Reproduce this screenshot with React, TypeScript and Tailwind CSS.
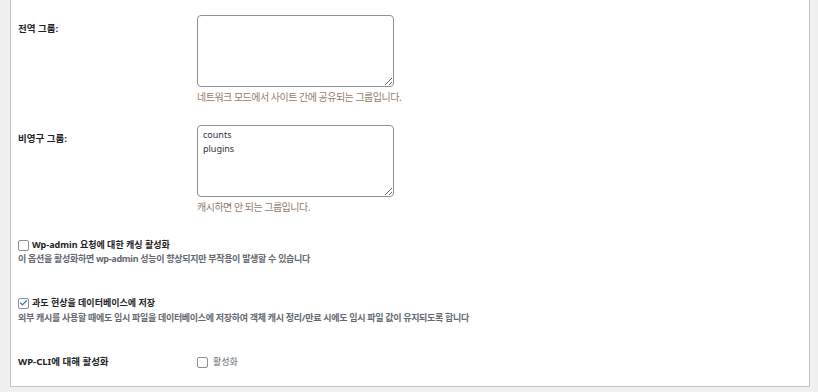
import { Check } from 'lucide-react';

const font = { fontFamily: '"Noto Sans", "Noto Sans CJK KR", sans-serif' };

function Box({ checked = false }: { checked?: boolean }) {
  return (
    <span className="flex h-[11px] w-[11px] shrink-0 items-center justify-center rounded-[2px] border border-[#8c8f94] bg-white">
      {checked && <Check className="h-[10px] w-[10px] text-[#2271b1]" strokeWidth={3} />}
    </span>
  );
}

export default function App() {
  return (
    <div className="h-[392px] overflow-hidden bg-[#f0f0f1] pl-[10px] pr-[8px]" style={font}>
      <div className="h-[387px] w-[800px] border border-t-0 border-[#c3c4c7] bg-white pl-[7px] text-[9px] leading-[14px] text-[#1d2327]">
        {/* 전역 그룹 */}
        <div className="flex pt-[15px]">
          <div className="w-[179px] pt-[7px] text-[9.5px] font-bold">전역 그룹:</div>
          <div>
            <textarea className="block h-[72px] w-[197px] rounded-[4px] border border-[#8c8f94] px-[5px] py-[2px] text-[#2c3338]" />
            <p className="mt-[3px] text-[10px] tracking-[-0.5px] text-[#927b6c]">네트워크 모드에서 사이트 간에 공유되는 그룹입니다.</p>
          </div>
        </div>

        {/* 비영구 그룹 */}
        <div className="mt-[21px] flex">
          <div className="w-[179px] pt-[7px] text-[9.5px] font-bold">비영구 그룹:</div>
          <div>
            <textarea
              defaultValue={'counts\nplugins'}
              className="block h-[72px] w-[197px] rounded-[4px] border border-[#8c8f94] px-[5px] py-[2px] text-[#2c3338]"
            />
            <p className="mt-[3px] text-[10px] tracking-[-0.5px] text-[#927b6c]">캐시하면 안 되는 그룹입니다.</p>
          </div>
        </div>

        {/* wp-admin */}
        <label className="mt-[24px] flex items-center gap-[3px] font-bold">
          <Box />
          Wp-admin 요청에 대한 캐싱 활성화
        </label>
        <p className="font-bold tracking-[-0.3px] text-[#646970]">이 옵션을 활성화하면 wp-admin 성능이 향상되지만 부작용이 발생할 수 있습니다</p>

        <label className="mt-[30px] flex items-center gap-[3px] font-bold">
          <Box checked />
          과도 현상을 데이터베이스에 저장
        </label>
        <p className="mt-[1px] font-bold tracking-[-0.3px] text-[#646970]">
          외부 캐시를 사용할 때에도 임시 파일을 데이터베이스에 저장하여 객체 캐시 정리/만료 시에도 임시 파일 값이 유지되도록 합니다
        </p>

        {/* WP-CLI */}
        <div className="mt-[30px] flex items-center">
          <div className="w-[179px] text-[9.5px] font-bold">WP-CLI에 대해 활성화</div>
          <label className="flex items-center gap-[5px] text-[#646970]">
            <Box />
            활성화
          </label>
        </div>
      </div>
    </div>
  );
}
